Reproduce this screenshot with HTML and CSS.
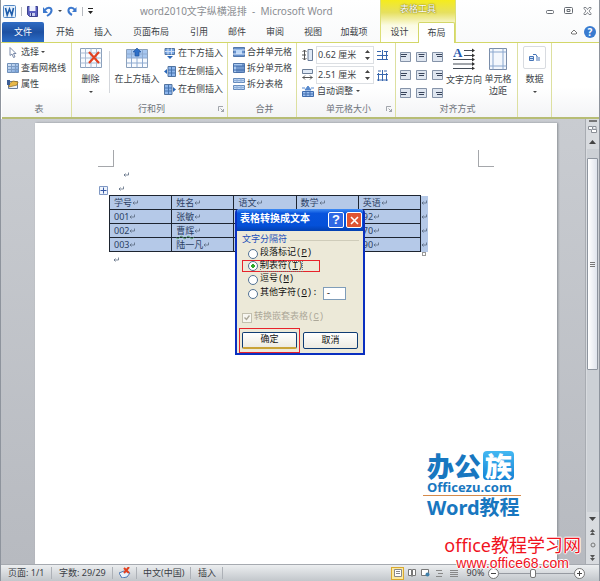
FILE: index.html
```html
<!DOCTYPE html>
<html lang="zh-CN">
<head>
<meta charset="utf-8">
<meta name="viewport" content="width=device-width, initial-scale=1">
<title>word2010文字纵横混排 - Microsoft Word</title>
<link rel="stylesheet" href="styles.css">
</head>
<body>
<svg class="defs" aria-hidden="true">
  <linearGradient id="blue" x1="0" y1="0" x2="1" y2="1"><stop offset="0" stop-color="#e4effc"/><stop offset="1" stop-color="#6b9ad8"/></linearGradient>
  <symbol id="grid" viewBox="0 0 12 10"><path fill="url(#blue)" stroke="#6f8fb8" d="M.5.5h11v9H.5z"/><path stroke="#7d9cc4" fill="none" d="M.5 3.5h11M.5 6.5h11M4.500 .5v9M8.500 .5v9"/></symbol>
  <symbol id="mark" viewBox="0 0 6 6"><path d="M5.500 .5v2.500H1M2.500 1.500L1 3l1.500 1.500" fill="none" stroke="#5b6b80" stroke-width=".8"/></symbol>
  <symbol id="launch" viewBox="0 0 6 6"><path d="M.5 5V.5H5M2.500 2.500l3 3M5.500 3v2.500H3" fill="none" stroke="#8b9098" stroke-width=".8"/></symbol>
</svg>
<div class="window">
  <header class="header">
    <div class="head-main">
      <div class="titlebar">
        <div class="quick">
          <svg width="13" height="13" viewBox="0 0 13 13"><rect x=".5" y=".5" width="12" height="12" rx="1" fill="#e6f1fc" stroke="#5588c4"/><path d="M2.500 3l1.700 7 2.300-6 2.300 6 1.700-7" fill="none" stroke="#1e5cab" stroke-width="1.600"/></svg>
          <i class="sep"></i>
          <button aria-label="保存"><svg width="11" height="11" viewBox="0 0 11 11"><path d="M.5.5h10v10h-8l-2-2z" fill="#5a5fc0" stroke="#3d438f"/><path d="M2.500 0h6v5h-6z" fill="#f2f5ff"/><path d="M3 7h5v3H3z" fill="#c8cef0"/><path d="M4 7h1v3H4z" fill="#333a80"/></svg></button>
          <button aria-label="撤消"><svg width="10" height="11" viewBox="0 0 10 11"><path d="M2 4c2-3 6-3 6.500 0S7 8 4 10" fill="none" stroke="#3c78cd" stroke-width="2"/><path d="M0 1v6h5z" fill="#3c78cd"/></svg></button>
          <i class="caret"></i>
          <button aria-label="重复"><svg width="10" height="11" viewBox="0 0 10 11"><path d="M8 4C6 1 2 1 1.500 4S3 8 5 9" fill="none" stroke="#3c78cd" stroke-width="2"/><path d="M9.500 1v5H5z" fill="#3c78cd"/></svg></button>
          <i class="sep"></i>
          <svg width="5" height="6" viewBox="0 0 5 6"><path d="M0 0h5v1H0zM0 3h5L2.500 6z" fill="#222"/></svg>
        </div>
        <h1 class="title">word2010文字纵横混排 &nbsp;-&nbsp; Microsoft Word</h1>
      </div>
      <nav class="tabs">
        <button class="tab file">文件</button>
        <button class="tab">开始</button>
        <button class="tab">插入</button>
        <button class="tab wide">页面布局</button>
        <button class="tab">引用</button>
        <button class="tab">邮件</button>
        <button class="tab">审阅</button>
        <button class="tab">视图</button>
        <button class="tab mid">加载项</button>
      </nav>
    </div>
    <div class="context">
      <div class="context-name">表格工具</div>
      <nav class="context-tabs"><button class="tab">设计</button><button class="tab active">布局</button></nav>
    </div>
    <div class="head-side">
      <div class="winbtns">
        <button aria-label="最小化"><svg width="8" height="8" viewBox="0 0 8 8"><rect x=".5" y="3.500" width="7" height="3" rx="1" fill="#fff" stroke="#666b72"/></svg></button>
        <button aria-label="还原"><svg width="9" height="8" viewBox="0 0 9 8"><rect x=".5" y=".5" width="8" height="6" rx="1" fill="#fff" stroke="#666b72"/><path d="M3 2.500h3v2H3z" fill="none" stroke="#666b72"/></svg></button>
        <button aria-label="关闭"><svg width="9" height="8" viewBox="0 0 9 8"><path d="M1 .5h2l1.500 2 1.500-2h2v1L6 4l2 2.500v1H6l-1.500-2-1.500 2H1v-1L3 4 1 1.500z" fill="#fff" stroke="#666b72" stroke-width=".8"/></svg></button>
      </div>
      <div class="helpbtns">
        <button aria-label="折叠功能区"><svg width="8" height="6" viewBox="0 0 8 6"><path d="M1 4l3-3 3 3-1 1H2z" fill="#fff" stroke="#777"/></svg></button>
        <button class="help" aria-label="帮助">?</button>
      </div>
    </div>
  </header>

  <section class="ribbon">
    <div class="group g-table">
      <div class="stack">
        <button class="cmd"><svg width="12" height="11" viewBox="0 0 12 11"><path d="M3 .5v8l2-1.500 1.500 3.500 1.500-.6-1.500-3.400h2.500z" fill="#fff" stroke="#5b6f94" stroke-width=".8"/></svg>选择<i class="caret"></i></button>
        <button class="cmd"><svg width="12" height="10"><use href="#grid"/></svg>查看网格线</button>
        <button class="cmd"><svg width="12" height="10" viewBox="0 0 12 10"><path d="M1.500 2.500h9v7h-9z" fill="#eef3fa" stroke="#667b9c"/><path d="M2 5l4-3 5 1-1 3-4 1-4 1z" fill="#e8b84a" stroke="#8f6b22" stroke-width=".7"/><path d="M0 1h3v5H0z" fill="#3d5e94"/></svg>属性</button>
      </div>
      <footer>表</footer>
    </div>
    <div class="group g-rows">
      <div class="row">
        <button class="big del"><svg width="22" height="21" viewBox="0 0 22 21"><path d="M.5.500h21v19H.5z" fill="#f8fbff" stroke="#8ba0bb"/><path d="M.5 5h21M.5 10h21M.5 15h21M5.500 .5v19M11 .5v19M16.500 .5v19" stroke="#a8bbd4" fill="none"/><path d="M9 4l10 11M19 4L9 15" stroke="#e2401f" stroke-width="2.200"/></svg>删除<i class="caret"></i></button>
        <i class="vline"></i>
        <button class="big ins"><svg width="22" height="21" viewBox="0 0 22 21"><path d="M.5 1.500h21v18H.5z" fill="#f8fbff" stroke="#8ba0bb"/><path d="M1 2h20v8H1z" fill="#a6c6ef"/><path d="M.5 6h21M.5 10h21M.5 15h21M5.500 1.500v18M11 1.500v18M16.500 1.500v18" stroke="#8eaad0" fill="none"/><path d="M11 0l4 4h-2v4H9V4H7z" fill="#2d6fc8" stroke="#1e4f98" stroke-width=".6"/></svg>在上方插入</button>
        <div class="stack three">
          <button class="cmd"><svg width="12" height="11" viewBox="0 0 12 11"><path d="M1 .500h9.500v6H1z" fill="#75a4e4" stroke="#54759f"/><path d="M1 3.500h9.500M4 .5v6M7.500 .5v6" stroke="#cfe0f6"/><path d="M6 11L3 8h6z" fill="#2866b8"/></svg>在下方插入</button>
          <button class="cmd"><svg width="12" height="11" viewBox="0 0 12 11"><path d="M4 .5h7.500v10H4z" fill="#8db5ec" stroke="#54759f"/><path d="M7.500 .5v10M4 4h7.500M4 7h7.500" stroke="#4775af"/><path d="M0 5.500L3 3v5z" fill="#2866b8"/></svg>在左侧插入</button>
          <button class="cmd"><svg width="12" height="11" viewBox="0 0 12 11"><path d="M.5.5H8v10H.5z" fill="#8db5ec" stroke="#54759f"/><path d="M4.500 .5v10M.5 4H8M.5 7H8" stroke="#4775af"/><path d="M12 5.500L9 3v5z" fill="#2866b8"/></svg>在右侧插入</button>
        </div>
      </div>
      <footer>行和列<svg class="launch" width="6" height="6"><use href="#launch"/></svg></footer>
    </div>
    <div class="group g-merge">
      <div class="stack">
        <button class="cmd"><svg width="12" height="10" viewBox="0 0 12 10"><path d="M.5.5h11v9H.5z" fill="#6590cd" stroke="#5277aa"/><path d="M3 2.500h6v4.500H3z" fill="#bfdaf9"/><path d="M0 3h3M0 7h12M9 3h3" stroke="#dce9fa"/></svg>合并单元格</button>
        <button class="cmd"><svg width="12" height="10" viewBox="0 0 12 10"><path d="M.5.5h11v9H.5z" fill="#a9c9f1" stroke="#5277aa"/><path d="M0 3h12M0 7h12M4 3v7M6 3v7M8 3v7M10 1v8" stroke="#3c68a9"/></svg>拆分单元格</button>
        <button class="cmd"><svg width="12" height="12" viewBox="0 0 12 12"><path d="M.5.5h11v4H.5zM.5 7.500h11v4H.5z" fill="#bdd5f3" stroke="#668bbb"/><path d="M.5 2.500h11M.5 9.500h11M4 .5v4M8 .5v4M4 7.500v4M8 7.500v4" stroke="#8fafd9"/></svg>拆分表格</button>
      </div>
      <footer>合并</footer>
    </div>
    <div class="group g-size">
      <div class="sizes">
        <div class="size-row"><label for="h"><svg width="11" height="12" viewBox="0 0 11 12"><path d="M6 .5h4.500v11H6z" fill="#dfe9f6" stroke="#6c7e98"/><path d="M2.500 1v10M.5 3l2-2 2 2M.5 9l2 2 2-2M0 6h4" fill="none" stroke="#555"/></svg></label><span class="spin"><input id="h" aria-label="高度" value="0.62 厘米"><svg width="5" height="10" viewBox="0 0 5 10"><path d="M0 3h5L2.500 0zM0 7h5L2.500 10z" fill="#444"/></svg></span><svg width="11" height="12" viewBox="0 0 11 12"><path d="M0 2.500h4M0 6.500h11M0 10.500h11M5.500 1v10M7 2.500h4M9.500 2v9" stroke="#3867ae"/></svg></div>
        <div class="size-row"><label for="w"><svg width="11" height="12" viewBox="0 0 11 12"><path d="M.5.5h10v4H.5z" fill="#dfe9f6" stroke="#6c7e98"/><path d="M.5 8.500h10M3 6.500l-2 2 2 2M8 6.500l2 2-2 2" fill="none" stroke="#555"/></svg></label><span class="spin"><input id="w" aria-label="宽度" value="2.51 厘米"><svg width="5" height="10" viewBox="0 0 5 10"><path d="M0 3h5L2.500 0zM0 7h5L2.500 10z" fill="#444"/></svg></span><svg width="11" height="12" viewBox="0 0 11 12"><path d="M1 2h3M7 2h3M0 5.500h11M1.500 4v8M5.500 1v11M9.500 4v8M0 11h11" stroke="#3867ae"/></svg></div>
        <button class="cmd auto"><svg width="12" height="11" viewBox="0 0 12 11"><path d="M.5 5.500h11v5H.5z" fill="#9dc0ef" stroke="#406cad"/><path d="M.5 8h11M4 5v6M8 5v6" stroke="#406cad"/><path d="M0 2h3M9 2h3M6 0l3 4H3z" stroke="#5688cd" fill="#5688cd"/></svg>自动调整<i class="caret"></i></button>
      </div>
      <footer>单元格大小<svg class="launch" width="6" height="6"><use href="#launch"/></svg></footer>
    </div>
    <div class="group g-align">
      <div class="row">
        <div class="aligns" id="aligns"></div>
        <button class="big dir"><svg width="22" height="23" viewBox="0 0 22 23"><text x="0" y="10" class="letter">A</text><path d="M11 3.500h10M11 8.500h10M0 12.500h21M0 17h21M0 21.500h21" stroke="#444c57" stroke-width="1.200"/><path d="M19 1.500v4l3-2zM19 6.500v4l3-2zM19 10.500v4l3-2zM19 15v4l3-2zM19 19.500v3.500l3-1.500z" fill="#333"/></svg>文字方向</button>
        <button class="big mar"><svg width="18" height="22" viewBox="0 0 18 22"><path d="M.5.5h17v21H.5z" fill="#f4f8fd" stroke="#7a8da9"/><path d="M4 .5v21M14 .5v21M.5 4h17M.5 18h17" stroke="#8ba8cf"/></svg>单元格<br>边距</button>
      </div>
      <footer>对齐方式</footer>
    </div>
    <div class="group g-data">
      <button class="big"><span class="tile"><svg width="11" height="9" viewBox="0 0 11 9"><path d="M.5 3.500h4v4h-4z" fill="#d3e3f8" stroke="#4775b7"/><path d="M.5 5.500h4M4 1.500h3l1 2M8 3v5M10 4v4" fill="none" stroke="#4775b7"/></svg></span>数据<i class="caret"></i></button>
    </div>
    <div class="filler"></div>
  </section>

  <main class="work">
    <div class="canvas">
      <article class="page">
        <div class="corners"><i class="corner left"></i><i class="corner right"></i></div>
        <div class="doc">
          <p class="para one"><svg width="6" height="6"><use href="#mark"/></svg></p>
          <p class="para two"><svg class="mover" width="9" height="9" viewBox="0 0 9 9"><path d="M.5.5h8v8h-8z" fill="#eef4fd" stroke="#8199c4"/><path d="M4.500 1.500v6M1.500 4.500h6" stroke="#3658a5"/></svg><svg width="6" height="6"><use href="#mark"/></svg></p>
          <table class="grades"><tbody id="rows"></tbody></table>
          <p class="para last"><svg width="6" height="6"><use href="#mark"/></svg><i class="handle"></i></p>
        </div>
      </article>
    </div>
    <div class="scroll">
      <span class="split"></span>
      <button aria-label="标尺"><svg width="9" height="9" viewBox="0 0 9 9"><path d="M.5 1.500h4v3h4v3h-5v-3h-3zM5 1.500h3v3" fill="#fff" stroke="#8a8f96"/></svg></button>
      <button aria-label="向上"><svg width="7" height="4"><path d="M0 4h7L3.500 0z" fill="#444"/></svg></button>
      <span class="track"><span class="thumb"><i></i><i></i><i></i></span></span>
      <button aria-label="向下"><svg width="7" height="4"><path d="M0 0h7L3.500 4z" fill="#444"/></svg></button>
      <button aria-label="上一页"><svg width="5" height="6"><path d="M0 3h5L2.500 0zM0 6h5L2.500 3z" fill="#555"/></svg></button>
      <button aria-label="选择浏览对象"><svg width="6" height="6"><circle cx="3" cy="3" r="2" fill="none" stroke="#777"/></svg></button>
      <button aria-label="下一页"><svg width="5" height="6"><path d="M0 0h5L2.500 3zM0 3h5L2.500 6z" fill="#555"/></svg></button>
    </div>
  </main>

  <footer class="status">
    <span class="s-item s-page">页面: 1/1</span>
    <span class="s-item s-count">字数: 29/29</span>
    <span class="s-item s-spell"><svg width="12" height="11" viewBox="0 0 12 11"><path d="M0 6l5-2 6 2-3 4-5 1z" fill="#e9f1fb" stroke="#4f78b2"/><path d="M5 1l5 5M10 0L5 6" stroke="#e2401f" stroke-width="2"/></svg></span>
    <span class="s-item s-lang">中文(中国)</span>
    <span class="s-item s-mode">插入</span>
    <span class="grow"></span>
    <div class="views">
      <button class="view on" aria-label="页面视图"><svg width="8" height="8"><path d="M.5.5h7v7h-7zM2 2.500h4M2 4.500h4" fill="#fff" stroke="#888"/></svg></button>
      <button class="view" aria-label="阅读视图"><svg width="8" height="8"><path d="M.5.500h3v6h-3zM4.500 .5h3v6h-3zM4 1v7" fill="#fff" stroke="#777"/></svg></button>
      <button class="view" aria-label="Web 视图"><svg width="9" height="8"><path d="M.5.5h7v6h-7z" fill="#fff" stroke="#777"/><circle cx="6.500" cy="5.500" r="2" fill="#3f80aa"/></svg></button>
      <button class="view" aria-label="大纲"><svg width="8" height="8"><path d="M0 1.500h6M2 4.500h5M0 7.500h6" stroke="#888"/></svg></button>
      <button class="view" aria-label="草稿"><svg width="8" height="8"><path d="M0 1.500h8M0 3.500h8M0 5.500h8M0 7.500h8" stroke="#888"/></svg></button>
    </div>
    <span class="zoom">90%</span>
    <div class="slider"><button aria-label="缩小"><svg width="11" height="11"><circle cx="5.500" cy="5.500" r="5" fill="#fff" stroke="#777"/><path d="M3 5.500h5" stroke="#444"/></svg></button><input type="range" aria-label="显示比例" value="45"><button aria-label="放大"><svg width="11" height="11"><circle cx="5.500" cy="5.500" r="5" fill="#fff" stroke="#777"/><path d="M3 5.500h5M5.500 3v5" stroke="#444"/></svg></button></div>
  </footer>

  <form class="dialog" role="dialog" aria-label="表格转换成文本">
    <div class="d-title"><h2>表格转换成文本</h2><button type="button" class="d-help" aria-label="帮助">?</button><button type="button" class="d-close" aria-label="关闭"><svg width="9" height="9"><path d="M1 1l7 7M8 1L1 8" stroke="#fff" stroke-width="1.600"/></svg></button></div>
    <div class="d-body">
      <div class="legend"><span>文字分隔符</span></div>
      <label class="opt"><input type="radio" name="s"><span>段落标记(<u>P</u>)</span></label>
      <label class="opt picked"><input type="radio" name="s" checked><span class="focus">制表符(<u>T</u>)</span></label>
      <label class="opt"><input type="radio" name="s"><span>逗号(<u>M</u>)</span></label>
      <div class="other"><label class="opt"><input type="radio" name="s"><span>其他字符(<u>O</u>):</span></label><input class="char" aria-label="字符" value="-"></div>
      <label class="opt nest"><span class="check"><input type="checkbox" checked disabled><svg width="6" height="6"><path d="M.5 2.500l2 2 3-4" fill="none" stroke="#aca899" stroke-width="1.400"/></svg></span><span>转换嵌套表格(<u>C</u>)</span></label>
      <div class="d-buttons"><span class="ring"><button type="button" class="btn ok">确定</button></span><button type="button" class="btn">取消</button></div>
    </div>
  </form>

  <div class="brand">
    <div class="brand-top"><span>办公</span><b>族</b></div>
    <div class="brand-url">Officezu.com</div>
    <div class="brand-sub">Word教程</div>
  </div>
  <div class="site"><div class="site-name">office教程学习网</div><div class="site-url">www.office68.com</div></div>
</div>
<script src="app.js"></script>
</body>
</html>
```
FILE: styles.css
```css
* { box-sizing: border-box; }
body, h1, h2, p { margin: 0; font-weight: normal; }
body { font: 9px/12px "Noto Sans", "Noto Sans CJK SC", sans-serif; color: #3b3f46; }
button, input { font: inherit; color: inherit; margin: 0; padding: 0; border: 0; background: none; }
svg { display: block; flex: none; }
i { font-style: normal; }
.defs { position: absolute; width: 0; height: 0; }
.window { position: relative; min-height: 100vh; display: flex; flex-direction: column; border: solid #8e949d; border-width: 0 1px; background: #fff; }
.caret { border: 2px solid transparent; border-top-color: #444; border-bottom: 0; }

.header { display: flex; height: 43px; background: linear-gradient(#fff, #f9fafb); border-bottom: 1px solid #d3d769; }
.head-main { display: flex; flex-direction: column; width: 379px; }
.titlebar { display: flex; align-items: center; height: 22px; }
.quick { display: flex; align-items: center; gap: 5px; padding-left: 2px; width: 139px; }
.sep { width: 1px; height: 9px; background: #b5b9bf; }
.title { font-size: 10px; color: #8a8d92; white-space: nowrap; }
.tabs { display: flex; height: 20px; padding-left: 1px; }
.tab { width: 38px; height: 20px; text-align: center; white-space: nowrap; }
.tab.wide { width: 58px; }
.tab.mid { width: 44px; }
.tab.file { width: 42px; color: #fff; background: linear-gradient(#2f6cc4, #1d50a2 50%, #2b6cc7); border-radius: 2px 2px 0 0; margin-right: 2px; }
.context { width: 76px; background: linear-gradient(#f5ec1c, #e6e060 30%, #fbfbe2 60%, #fff); border: solid #dcdf76; border-width: 0 1px; }
.context-name { height: 22px; padding-top: 3px; font-size: 9px; text-align: center; color: #fff; text-shadow: 0 0 2px #77731c, 0 0 1px #77731c; }
.context-tabs { display: flex; height: 21px; }
.tab.active { height: 21px; background: #fff; border: 1px solid #d3d769; border-bottom: 0; border-radius: 2px 2px 0 0; }
.head-side { flex: 1; display: flex; flex-direction: column; align-items: flex-end; padding-right: 3px; }
.winbtns { display: flex; gap: 10px; height: 22px; align-items: center; padding-right: 4px; }
.helpbtns { display: flex; gap: 6px; height: 20px; align-items: center; }
.help { width: 12px; height: 12px; border-radius: 6px; background: #397bd0; color: #fff; font-weight: bold; font-size: 10px; line-height: 12px; }

.ribbon { display: flex; height: 76px; margin-left: 1px; background: linear-gradient(#fff 60%, #f3f4f6); border-bottom: 2px solid #b7bd75; white-space: nowrap; }
.group { display: flex; flex-direction: column; justify-content: space-between; border-right: 1px solid #dde0a0; padding: 3px 0 2px 5px; }
.group > footer { position: relative; text-align: center; color: #6f747c; }
.launch { position: absolute; right: 3px; top: 3px; }
.g-table { width: 70px; }
.g-rows { width: 156px; padding-left: 4px; }
.g-merge { width: 69px; }
.g-size { width: 99px; padding-top: 2px; }
.g-align { width: 122px; padding-left: 2px; }
.g-data { width: 34px; padding-left: 0; align-items: center; }
.filler { flex: 1; }
.stack { display: flex; flex-direction: column; gap: 4px; }
.stack.three { gap: 6px; padding-top: 1px; }
.cmd { display: flex; align-items: center; gap: 3px; height: 12px; line-height: 12px; white-space: nowrap; }
.g-rows .cmd, .g-table .cmd, .g-merge .cmd { gap: 2px; }
.row { display: flex; }
.big { display: flex; flex-direction: column; align-items: center; gap: 4px; padding-top: 2px; line-height: 12px; }
.big .caret { margin-top: 2px; }
.del { width: 29px; }
.vline { width: 1px; height: 42px; margin: 5px 4px 0; background: #d4d7dc; }
.ins { width: 46px; margin-right: 4px; }
.sizes { display: flex; flex-direction: column; gap: 1px; }
.size-row { display: flex; align-items: center; gap: 3px; height: 19px; }
.spin { display: flex; align-items: center; width: 58px; height: 18px; border: 1px solid #dcdfe3; background: #fff; }
.spin input { width: 48px; padding-left: 1px; min-width: 0; }
.aligns { display: grid; grid-template-columns: repeat(3, 10px); gap: 8px 6px; width: 48px; padding: 6px 0 0 2px; align-content: start; }
.dir { width: 36px; padding-top: 1px; }
.mar { width: 32px; gap: 3px; }
.letter { font: bold 13px "Liberation Serif", serif; fill: #2458ae; }
.tile { display: grid; place-items: center; width: 23px; height: 23px; border: 1px solid #d8dbe0; border-radius: 2px; }
.g-data .big { padding-top: 0; }

.work { flex: 1; display: flex; background: #c3c6cb; }
.canvas { flex: 1; display: flex; padding: 4px 28px 0 34px; background: linear-gradient(#c9ccd1, #b7bac0); }
.page { flex: 1; background: #fff; box-shadow: 1px 0 2px #8a8e94; padding: 27px 63px 0; }
.corners { display: flex; justify-content: space-between; }
.corner { width: 16px; height: 17px; border: 0 solid #a5a7ab; border-bottom-width: 1px; }
.corner.left { border-right-width: 1px; }
.corner.right { border-left-width: 1px; }
.doc { padding: 0 0 0 11px; }
.para { display: flex; align-items: center; height: 13px; }
.para.one { padding-left: 14px; height: 15px; }
.para.two { margin-left: -10px; gap: 10px; }
.para.last { width: 317px; padding-left: 4px; height: 16px; justify-content: space-between; }
.handle { align-self: flex-start; width: 4px; height: 4px; border: 1px solid #999; background: #fff; }
.mover { align-self: flex-end; }
.grades { border-collapse: collapse; width: 319px; table-layout: fixed; line-height: 12px; color: #2c3f63; }
.grades td { width: 62px; height: 14px; padding: 1px 0 0 4px; border: 1px solid #1d2430; background: #b5c9e8; }
.grades td.end { width: 7px; padding: 0; border-color: transparent; border-left-color: #1d2430; }
.grades svg { display: inline-block; }
.wave { text-decoration: underline wavy #4f9a62 1px; }

.scroll { width: 14px; display: flex; flex-direction: column; align-items: center; gap: 1px; background: #d8dbdf; border-left: 1px solid #a8acb2; }
.scroll button { display: grid; place-items: center; width: 12px; height: 12px; }
.split { width: 8px; height: 2px; margin-top: 1px; background: #777; }
.track { flex: 1; width: 12px; padding-top: 9px; background: #ccd0d5; }
.thumb { display: flex; flex-direction: column; align-items: center; justify-content: center; gap: 1px; width: 11px; height: 60%; background: linear-gradient(90deg, #fff, #dfe4ec); border: 1px solid #8d949e; border-radius: 1px; }
.thumb i { width: 5px; height: 1px; background: #777; }

.status { display: flex; align-items: center; height: 17px; background: linear-gradient(#eceef0, #c2c6cb); border-top: 1px solid #a6aab0; white-space: nowrap; }
.s-item { height: 12px; line-height: 12px; border-right: 1px solid #adb1b7; }
.s-page { width: 51px; padding-left: 7px; }
.s-count { width: 61px; padding-left: 7px; }
.s-spell { width: 24px; padding-left: 6px; }
.s-lang { width: 54px; padding-left: 6px; }
.s-mode { width: 32px; padding-left: 7px; }
.grow { flex: 1; }
.views { display: flex; gap: 1px; }
.view { display: grid; place-items: center; width: 13px; height: 13px; }
.view.on { background: #fbe9a0; border: 1px solid #d9a92f; }
.zoom { width: 25px; margin-left: 3px; text-align: center; }
.slider { display: flex; align-items: center; width: 97px; margin-right: 14px; }
.slider input { flex: 1; min-width: 0; height: 10px; appearance: none; background: linear-gradient(#969aa1, #969aa1) center / 100% 1px no-repeat; }
.slider input::-webkit-slider-thumb { appearance: none; width: 6px; height: 9px; border: 1px solid #777; border-radius: 2px; background: #fff; }

.dialog { position: absolute; left: 234px; top: 209px; width: 130px; color: #111; background: #ece9d8; border: 2px solid #0a2fc0; border-top: 0; border-radius: 4px 4px 0 0; font-family: "Liberation Mono", "Noto Sans CJK SC", monospace; white-space: nowrap; }
.d-title { display: flex; align-items: center; gap: 2px; height: 22px; padding: 0 1px 0 3px; background: linear-gradient(#3f8cf5, #0753dd 20%, #0450d8 75%, #0340b0); border-radius: 3px 3px 0 0; }
.d-title h2 { flex: 1; font-size: 10px; font-weight: bold; color: #fff; }
.d-help, .d-close { display: grid; place-items: center; width: 16px; height: 16px; border: 1px solid #fff; border-radius: 2px; color: #fff; background: #2f68e4; font: bold 13px/14px "Liberation Sans", sans-serif; }
.d-close { background: #df5433; }
.d-body { padding: 2px 2px 0 3px; }
.legend { display: flex; align-items: center; height: 14px; padding: 0 2px; color: #1c4fb8; gap: 3px; }
.legend::after { content: ""; flex: 1; height: 1px; background: #cfccba; }
.opt { display: flex; align-items: center; gap: 2px; width: max-content; height: 13px; padding-left: 8px; line-height: 11px; }
.opt input { appearance: none; flex: none; width: 10px; height: 10px; border: 1px solid #527294; border-radius: 5px; background: #fff; }
.opt input[type="radio"]:checked { background: radial-gradient(circle, #2faa2c 2px, #fff 2px); }
.opt.picked { width: 78px; height: 12px; margin: 0 0 1px 2px; padding-left: 5px; border: 1px solid #e8232b; }
.focus { outline: 1px dotted #777; outline-offset: -1px; }
.other { display: flex; align-items: center; gap: 5px; height: 15px; }
.char { width: 23px; height: 13px; padding-left: 2px; border: 1px solid #7f9db9; background: #fff; }
.opt.nest { margin-top: 10px; padding-left: 2px; color: #aca899; }
.check { display: grid; place-items: center; }
.check > * { grid-area: 1 / 1; }
.opt.nest input { border-radius: 0; border-color: #c2bfae; background: #f7f6f0; }
.check svg { z-index: 1; }
.d-buttons { display: flex; align-items: center; gap: 3px; margin: 4px 0 0 -1px; }
.ring { padding: 3px 2px; border: 1px solid #e8232b; height: 25px; }
.btn { display: block; width: 55px; height: 17px; border: 1px solid #0f3c74; border-radius: 2px; background: linear-gradient(#fff, #edebe2); line-height: 12px; }
.btn.ok { border-bottom: 2px solid #c9a338; }

.brand { position: absolute; right: 78px; bottom: 61px; width: 98px; padding-left: 4px; color: #1877c0; font-weight: bold; }
.brand-top { display: flex; align-items: center; gap: 2px; height: 29px; font: 900 27px/29px "Noto Sans CJK SC", sans-serif; }
.brand-top b { display: grid; place-items: center; width: 31px; height: 29px; border-radius: 4px; color: #fff; background: linear-gradient(#44b8f2, #1482d4); }
.brand-url { font-size: 13px; line-height: 15px; }
.brand-sub { margin-left: -4px; padding-left: 4px; border-top: 1px solid #d58a4a; font-size: 20px; line-height: 24px; white-space: nowrap; }
.site { position: absolute; right: 18px; bottom: 9px; text-align: center; color: #f0121d; text-shadow: 1px 0 #fff, -1px 0 #fff, 0 1px #fff, 0 -1px #fff; white-space: nowrap; }
.site-name { font-size: 18px; line-height: 20px; }
.site-url { font: 14px/17px "Liberation Sans", sans-serif; }
```
FILE: app.js
```js
const mark = '<svg width="6" height="6"><use href="#mark"/></svg>';
const rows = [
  ["学号", "姓名", "语文", "数学", "英语"],
  ["001", "张敏", "", "", "92"],
  ["002", "曹辉", "", "", "70"],
  ["003", "陆一凡", "", "", "90"]
];
document.getElementById("rows").innerHTML = rows.map(r =>
  "<tr>" + r.map(c => `<td>${c === "曹辉" ? `<span class="wave">${c}</span>` : c}${c ? mark : ""}</td>`).join("") +
  `<td class="end">${mark}</td></tr>`).join("");

const names = ["靠上", "中部", "靠下"];
const sides = ["左", "居中", "右"];
document.getElementById("aligns").innerHTML = names.map((n, y) => sides.map((s, x) =>
  `<button aria-label="${n}${s}"><svg width="11" height="10" viewBox="0 0 11 10"><path d="M.5.5h10v9H.5z" fill="#dfe6f0" stroke="#8593a8"/><path d="M${1 + x * 1.5} ${2.5 + y}h6M${1 + x * 2} ${4.5 + y}h5" stroke="#38445a"/></svg></button>`).join("")).join("");
```
